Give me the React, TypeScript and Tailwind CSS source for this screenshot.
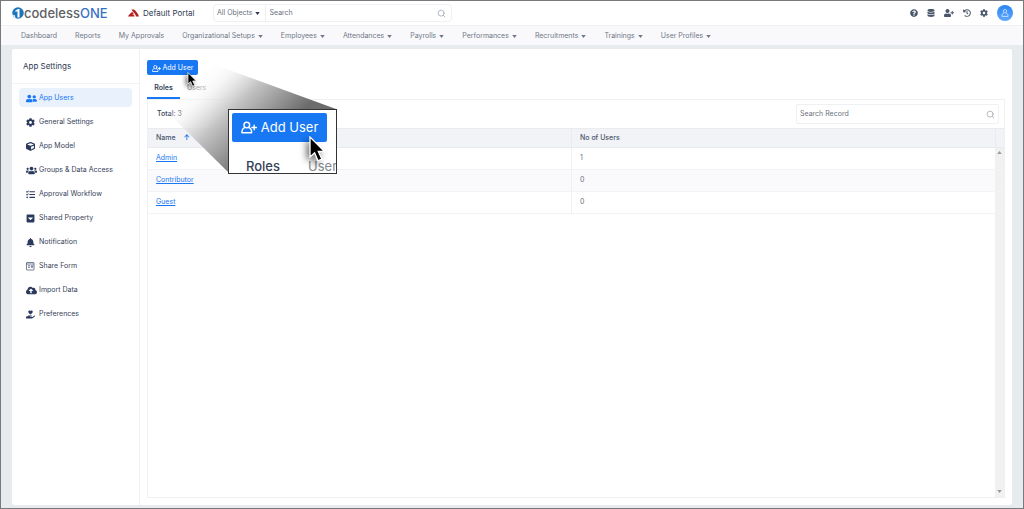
import React from "react";
import {
  FaBell,
  FaCloudUploadAlt,
  FaCog,
  FaCube,
  FaDatabase,
  FaCaretSquareDown,
  FaHandHoldingHeart,
  FaHistory,
  FaQuestionCircle,
  FaTasks,
  FaUserFriends,
  FaUserPlus,
  FaUsers,
} from "react-icons/fa";
import { FiSearch } from "react-icons/fi";

interface MenuItem {
  label: string;
  dropdown?: boolean;
}

const menu: MenuItem[] = [
  { label: "Dashboard" },
  { label: "Reports" },
  { label: "My Approvals" },
  { label: "Organizational Setups", dropdown: true },
  { label: "Employees", dropdown: true },
  { label: "Attendances", dropdown: true },
  { label: "Payrolls", dropdown: true },
  { label: "Performances", dropdown: true },
  { label: "Recruitments", dropdown: true },
  { label: "Trainings", dropdown: true },
  { label: "User Profiles", dropdown: true },
];

function FormIcon() {
  return (
    <svg viewBox="0 0 18 18" className="h-[9px] w-[9px]" fill="none" stroke="currentColor" strokeWidth="1.3">
      <rect x="1" y="1" width="15" height="15" rx="1" />
      <path d="M1 4h15M4 7.500h4M4 10.500h4M10.500 7.500h3v3h-3z" />
    </svg>
  );
}

const settings = [
  { label: "App Users", icon: FaUserFriends, active: true, wide: true },
  { label: "General Settings", icon: FaCog },
  { label: "App Model", icon: FaCube },
  { label: "Groups & Data Access", icon: FaUsers, wide: true },
  { label: "Approval Workflow", icon: FaTasks },
  { label: "Shared Property", icon: FaCaretSquareDown },
  { label: "Notification", icon: FaBell },
  { label: "Share Form", icon: FormIcon },
  { label: "Import Data", icon: FaCloudUploadAlt, wide: true },
  { label: "Preferences", icon: FaHandHoldingHeart },
];

const roles = [
  { name: "Admin", users: 1 },
  { name: "Contributor", users: 0 },
  { name: "Guest", users: 0 },
];

function Caret({ className = "" }: { className?: string }) {
  return (
    <svg viewBox="0 0 6 4" className={`h-[3px] w-[5px] shrink-0 ${className}`}>
      <path d="M0 0h6L3 4z" fill="currentColor" />
    </svg>
  );
}

function AddUserIcon({ className }: { className: string }) {
  return (
    <svg
      viewBox="0 0 18 14"
      className={className}
      fill="none"
      stroke="currentColor"
      strokeWidth="1.6"
      strokeLinecap="round"
      strokeLinejoin="round"
    >
      <circle cx="6.500" cy="4.200" r="3.200" />
      <path d="M4.200 7.200C2 8 1 9.800 1 13h11c0-3.200-1-5-3.200-5.800" />
      <path d="M14.800 4.500v5M12.300 7h5" />
    </svg>
  );
}

function Cursor({ className }: { className: string }) {
  return (
    <svg viewBox="0 0 16 26" className={className}>
      <path
        d="M1 1v20l4.600-4.200 3.400 8 3.800-1.700-3.500-7.600H15.500z"
        fill="#000"
        stroke="#fff"
        strokeWidth="1.300"
      />
    </svg>
  );
}

function Logo() {
  return (
    <a href="#" className="flex w-[95px] items-center text-[13px] leading-4 font-medium">
      <svg viewBox="0 0 24 24" className="h-3 w-3 shrink-0">
        <circle cx="12" cy="12" r="11.500" fill="#1b75bc" />
        <path d="M6 8l6-4h3v17h-4V9H6z" fill="#fff" />
        <path d="M1 15l5 2 1 6z" fill="#fff" />
      </svg>
      <span>
        <span className="text-[#5d5f65]">codeless</span>
        <span className="text-[#3a70c4]">ONE</span>
      </span>
    </a>
  );
}

function Header() {
  return (
    <header className="flex h-6 shrink-0 items-center bg-white pr-[10px] pl-[11px]">
      <Logo />
      <a href="#" className="ml-[21px] flex w-[85px] items-center gap-1 text-[8px] whitespace-nowrap text-[#2f3b52]">
        <svg viewBox="0 0 22 16" className="h-2 w-[11px] shrink-0">
          <path d="M7 1h5c4 3 8 8 10 14h-6c-1-4-3-7-6-9z" fill="#b3201f" />
          <path d="M9 6l3 5H8l5 2v2H0c2-4 5-7 9-9z" fill="#b3201f" />
        </svg>
        Default Portal
      </a>
      <div className="flex h-[18px] w-[239px] items-center rounded-sm border border-[#eef0f3] text-[7px] text-[#6b7280]">
        <button className="flex h-full items-center gap-[2px] border-r border-[#eef0f3] pr-[5px] pl-[3px] whitespace-nowrap">
          All Objects <Caret className="text-[#2f3b52]" />
        </button>
        <input
          type="text"
          aria-label="Search"
          placeholder="Search"
          className="min-w-0 flex-1 px-1 placeholder:text-[#6b7280] focus:outline-none"
        />
        <FiSearch className="mr-[5px] h-[9px] w-[9px] text-[#9ca3af]" />
      </div>
      <div className="ml-auto flex items-center gap-[9px] text-[8px] text-[#4a566b]">
        <button aria-label="Help"><FaQuestionCircle /></button>
        <button aria-label="Data"><FaDatabase /></button>
        <button aria-label="Invite"><FaUserPlus className="h-2 w-[10px]" /></button>
        <button aria-label="History"><FaHistory /></button>
        <button aria-label="Settings"><FaCog /></button>
        <button
          aria-label="Account"
          className="flex h-4 w-4 items-center justify-center rounded-full bg-linear-to-b from-[#2884f5] to-[#5fa8fb] text-[#dcecff]"
        >
          <svg viewBox="0 0 12 13" className="h-2 w-2" fill="none" stroke="currentColor" strokeWidth="1.300">
            <circle cx="6" cy="3.500" r="2.700" />
            <path d="M4.200 6.600C2.200 7 1 9 1 12h10c0-3-1.200-5-3.200-5.400" />
          </svg>
        </button>
      </div>
    </header>
  );
}

function MenuBar() {
  return (
    <nav className="flex h-5 shrink-0 items-center gap-[18px] border-t border-[#eef0f3] bg-[#f9f9fc] pt-px pl-5 text-[7px] text-[#6f7787]">
      {menu.map((item) => (
        <a key={item.label} href="#" className="flex items-center gap-[3px] whitespace-nowrap">
          {item.label}
          {item.dropdown && <Caret />}
        </a>
      ))}
    </nav>
  );
}

function Sidebar() {
  return (
    <aside className="w-32 shrink-0 border-r border-[#eef0f2]">
      <h2 className="flex h-[35px] items-center border-b border-[#f1f3f5] pl-[11px] text-[8px] text-[#2f3b52]">
        App Settings
      </h2>
      <ul className="flex flex-col gap-[5px] px-[7px] pt-1">
        {settings.map(({ label, icon: Icon, active, wide }) => (
          <li key={label}>
            <a
              href="#"
              className={`flex h-[19px] items-center gap-[2px] rounded pt-px pl-[7px] text-[7px] whitespace-nowrap ${
                active ? "bg-[#e8f1fc] text-[#1877f2]" : "text-[#36415a]"
              }`}
            >
              <span
                className={`flex w-[11px] ${wide ? "text-[11px]" : "text-[9px]"} ${
                  active ? "text-[#1877f2]" : "text-[#2b3a5c]"
                }`}
              >
                <Icon />
              </span>
              {label}
            </a>
          </li>
        ))}
      </ul>
    </aside>
  );
}

function RolesTable() {
  return (
    <table className="w-full table-fixed border-collapse text-left text-[7px] text-[#6b7280]">
      <thead className="bg-[#f2f3f7] text-[#4a566b]">
        <tr className="h-[19px] border-y border-[#e9ebef]">
          <th className="border-r border-[#e9ebef] pl-2 font-medium">
            Name <span className="ml-1.5 font-bold text-[#1877f2]">↑</span>
          </th>
          <th className="border-r border-[#e9ebef] pl-2 font-medium">No of Users</th>
          <th className="w-[9px]" />
        </tr>
      </thead>
      <tbody>
        {roles.map((role, i) => (
          <tr key={role.name} className="h-[22px] border-b border-[#f1f3f5] even:bg-[#fafafc]">
            <td className="border-r border-[#eef0f2] pl-2">
              <a href="#" className="text-[#1877f2] underline">
                {role.name}
              </a>
            </td>
            <td className="pl-2">{role.users}</td>
            <td className="bg-[#f1f1f1] pt-[3px] align-top">
              {i === 0 && <Caret className="mx-auto rotate-180 text-[#9a9a9a]" />}
            </td>
          </tr>
        ))}
      </tbody>
    </table>
  );
}

// enlarged view of the Add User button with its projection shadow
function Magnifier() {
  return (
    <div className="pointer-events-none absolute top-[10px] left-[7px] h-[115px] w-[192px]">
      <svg viewBox="0 0 192 115" className="absolute inset-0 h-full w-full">
        <defs>
          <linearGradient id="beam" gradientUnits="userSpaceOnUse" x1="42" y1="22" x2="112" y2="94">
            <stop offset="0" stopColor="#fff" stopOpacity="0" />
            <stop offset="0.220" stopColor="#f2f2f2" stopOpacity="0.600" />
            <stop offset="0.500" stopColor="#c0c0c0" stopOpacity="0.950" />
            <stop offset="1" stopColor="#6c6c6c" />
          </linearGradient>
        </defs>
        <path d="M52 0L189 50 82 114 6 39z" fill="url(#beam)" />
      </svg>
      <Cursor className="absolute top-[13px] left-10 h-[15px] w-[10px] drop-shadow-[-2px_2px_2px_#0008]" />
      <div className="absolute top-[50px] left-[81px] h-[65px] w-[109px] overflow-hidden border border-[#333] bg-white px-[3px] pt-[3px]">
        <button className="flex h-[29px] w-[95px] items-center justify-center gap-1 rounded-xs bg-[#1877f2] text-[13px] whitespace-nowrap text-white">
          <AddUserIcon className="h-[13px] w-4" />
          Add User
        </button>
        <div className="mt-[18px] flex gap-7 pl-[14px] text-[13px] leading-[13px]">
          <span className="font-medium text-[#36415a]">Roles</span>
          <span className="text-[#85888e]">User</span>
        </div>
        <Cursor className="absolute top-[26px] left-20 h-[26px] w-4 drop-shadow-[-3px_3px_3px_#0008]" />
      </div>
    </div>
  );
}

function AppUsers() {
  return (
    <main className="relative flex min-w-0 flex-1 flex-col px-[7px] pt-[11px] pb-[7px]">
      <button className="flex h-[15px] w-[51px] shrink-0 items-center justify-center gap-[2px] rounded-xs bg-[#1877f2] pt-px text-[7px] whitespace-nowrap text-white">
        <AddUserIcon className="h-[7px] w-[9px]" />
        Add User
      </button>
      <div role="tablist" className="mt-[3px] flex h-[21px] shrink-0 text-[7px]">
        <button
          role="tab"
          aria-selected="true"
          className="relative z-10 w-[33px] border-b-2 border-[#1877f2] pt-0.5 font-semibold text-[#36415a]"
        >
          Roles
        </button>
        <button role="tab" aria-selected="false" className="px-[7px] text-[#85888e]">
          Users
        </button>
      </div>
      <section className="flex min-h-0 flex-1 flex-col border border-[#eef0f2]">
        <div className="flex h-7 shrink-0 items-center justify-between pr-[5px] pl-[9px] text-[7px]">
          <span className="font-medium text-[#36415a]">Total: 3</span>
          <label className="flex h-5 w-[203px] items-center rounded-xs border border-[#eef0f2]">
            <input
              type="text"
              aria-label="Search Record"
              placeholder="Search Record"
              className="min-w-0 flex-1 px-[3px] placeholder:text-[#6b7280] focus:outline-none"
            />
            <FiSearch className="mr-[3px] h-[9px] w-[9px] text-[#9ca3af]" />
          </label>
        </div>
        <RolesTable />
        <div className="flex flex-1 justify-end">
          <div className="flex w-[9px] items-end justify-center bg-[#f1f1f1] pb-1">
            <Caret className="text-[#9a9a9a]" />
          </div>
        </div>
      </section>
      <Magnifier />
    </main>
  );
}

export default function App() {
  return (
    <div className="flex h-screen flex-col border border-[#77797c] bg-[#e8ebee] font-['Inter',sans-serif]">
      <Header />
      <MenuBar />
      <div className="mx-[11px] mt-1 mb-[3px] flex min-h-0 flex-1 rounded-xs bg-white">
        <Sidebar />
        <AppUsers />
      </div>
    </div>
  );
}
